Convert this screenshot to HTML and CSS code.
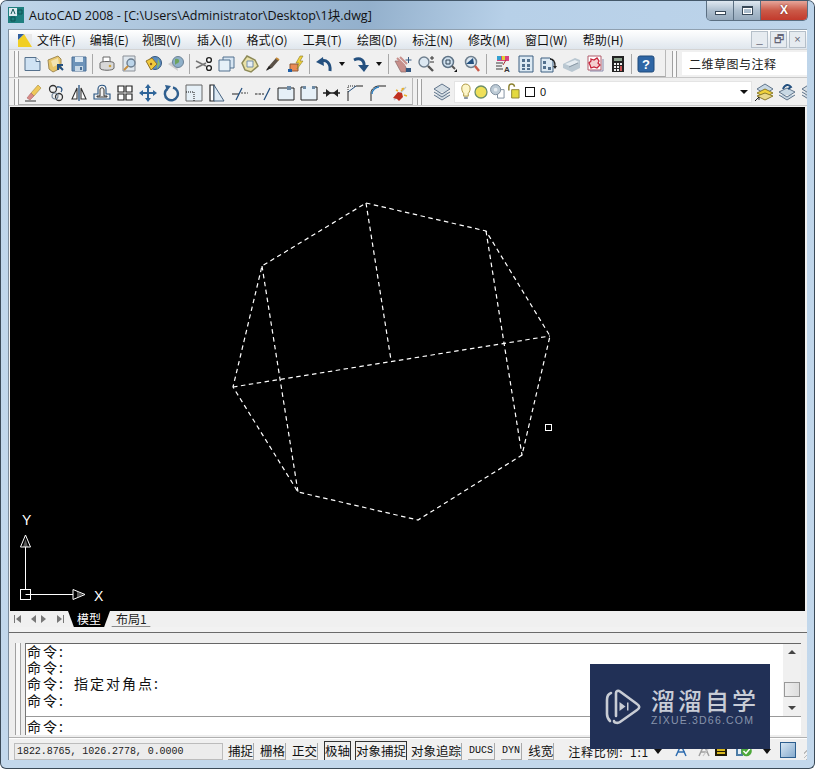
FILE: index.html
```html
<!DOCTYPE html>
<html lang="zh">
<head>
<meta charset="utf-8">
<title>AutoCAD 2008</title>
<link rel="stylesheet" href="styles.css">
</head>
<body>
<svg class="defs" width="0" height="0">
<defs>
<symbol id="new" viewBox="0 0 18 18"><path d="M1 2.500h11l4 4v9H1z" fill="#cfe2f3" stroke="#55708c"/><path d="M12 2.500v4h4" fill="#fff" stroke="#55708c"/></symbol>
<symbol id="open" viewBox="0 0 18 18"><path d="M1 5l10-4 3 3v9l-8 4-4-3z" fill="#e8c66b" stroke="#a08a55"/><path d="M4 6l7-3 1 6-6 3z" fill="#f3e3b0"/><path d="M11 10l5 5M11 15v-5h5" stroke="#24507f" stroke-width="2" fill="none"/></symbol>
<symbol id="save" viewBox="0 0 18 18"><path d="M2 2h14v14H2z" fill="#6d93b9" stroke="#4a6f96"/><path d="M5 2h8v5H5z" fill="#dbe8f3"/><path d="M5 11h8v5H5z" fill="#c8d8e6"/><path d="M10 12h2v3h-2z" fill="#4a6f96"/></symbol>
<symbol id="print" viewBox="0 0 18 18"><path d="M5 2h7v5H5z" fill="#fff" stroke="#666"/><path d="M2 8c0-2 14-2 14 0v5c0 3-14 3-14 0z" fill="#d8d8d8" stroke="#666"/><circle cx="12" cy="11" r="1.300" fill="#c9a13f"/></symbol>
<symbol id="prev" viewBox="0 0 18 18"><path d="M2 1h12v15H2z" fill="#dfe7ee" stroke="#8a8f96"/><circle cx="10" cy="8" r="4" fill="#bcd5ea" stroke="#6c7d8f" stroke-width="1.400"/><path d="M7 11l-4 4" stroke="#c78f3f" stroke-width="2"/></symbol>
<symbol id="pub" viewBox="0 0 18 18"><circle cx="11" cy="8" r="6.500" fill="#5d8dc0" stroke="#36587d"/><path d="M2 6l6-3 5 6-6 6z" fill="#f1c93c" stroke="#94752a"/><circle cx="7" cy="9" r="1.200" fill="#8a5a20"/><path d="M14 3l2 6-3 5" fill="#8bbb6a"/></symbol>
<symbol id="globe" viewBox="0 0 18 18"><path d="M1 9l8-5 2 12z" fill="#ccc"/><circle cx="11" cy="7" r="5.500" fill="#8fb0c9" stroke="#6c8296"/><path d="M8 4c3-1 5 1 4 3s-3 1-4 3z" fill="#6ea35f"/></symbol>
<symbol id="cut" viewBox="0 0 18 18"><path d="M1 6l10 5M1 13l10-5" stroke="#777" stroke-width="1.500"/><circle cx="14" cy="5" r="2.400" fill="#fff" stroke="#222" stroke-width="1.400"/><circle cx="14" cy="13" r="2.400" fill="#fff" stroke="#222" stroke-width="1.400"/></symbol>
<symbol id="copy" viewBox="0 0 18 18"><path d="M5 2h11v11H5z" fill="#d6e5f2" stroke="#52708e"/><path d="M1 5h11v11H1z" fill="#e6f0f8" stroke="#52708e"/></symbol>
<symbol id="paste" viewBox="0 0 18 18"><path d="M6 1l8 4 3 6-7 6-6-2-3-7z" fill="#e9e1a7" stroke="#8d8a58" stroke-width="1.500"/><path d="M6 6h6v6H6z" fill="#e5eef5" stroke="#758fa8"/></symbol>
<symbol id="match" viewBox="0 0 18 18"><path d="M2 15l3-4 7-8 3 2-7 8z" fill="#5a5148"/><path d="M2 16l3-5 2 2z" fill="#222"/><path d="M12 3l3 2" stroke="#c58a38" stroke-width="2"/></symbol>
<symbol id="block" viewBox="0 0 18 18"><path d="M3 9h8v7H3z" fill="#e98a55" stroke="#8a5a3b"/><path d="M1 14h4v3H1z" fill="#1e5fa8"/><path d="M13 1l-4 7h3l-2 6 6-8h-3l3-5z" fill="#f0d23a" stroke="#8a7a2a" stroke-width=".6"/></symbol>
<symbol id="undo" viewBox="0 0 18 18"><path d="M15 16C16 8 11 4 6 6" fill="none" stroke="#24507f" stroke-width="3"/><path d="M1 7l7-5 1 9z" fill="#24507f"/></symbol>
<symbol id="redo" viewBox="0 0 18 18"><path d="M2 5c6-3 11 0 10 7" fill="none" stroke="#24507f" stroke-width="3"/><path d="M6 10l11 0-5 7z" fill="#24507f"/></symbol>
<symbol id="pan" viewBox="0 0 18 18"><path d="M1 6l4 0 7 6 0 5-5 0z" fill="#c88f8b" stroke="#8a6a6a" stroke-width=".7"/><path d="M3 3l8 8M6 2l7 7" stroke="#c88f8b" stroke-width="2"/><path d="M12 13h5v4h-5z" fill="#33567f"/><path d="M14 2h1v6h-1zM11.500 4.500h6v1h-6z" fill="#33567f"/></symbol>
<symbol id="zoomr" viewBox="0 0 18 18"><circle cx="7" cy="7" r="5" fill="#dce8f2" stroke="#6f7f8e" stroke-width="1.400"/><path d="M11 11l5 5" stroke="#555" stroke-width="2.400"/><path d="M13 3h4M15 1v4M13 7h4" stroke="#333"/></symbol>
<symbol id="zoomw" viewBox="0 0 18 18"><circle cx="8" cy="7" r="5.500" fill="#cfe0ee" stroke="#5f7386" stroke-width="1.500"/><path d="M6 5h4v4H6z" fill="none" stroke="#345"/><path d="M12 11l3 3" stroke="#555" stroke-width="2"/><path d="M14 17h3v-3z" fill="#111"/></symbol>
<symbol id="zoomp" viewBox="0 0 18 18"><circle cx="8" cy="7" r="5.500" fill="#dce8f2" stroke="#6f7f8e" stroke-width="1.500"/><path d="M3 9L10 3l1 6z" fill="#24507f"/><path d="M12 11l4 5" stroke="#c85a4a" stroke-width="2.400"/></symbol>
<symbol id="prop" viewBox="0 0 18 18"><path d="M3 1h12v5H3z" fill="#d6427f"/><path d="M3 1h4v4H3z" fill="#35a0d0"/><path d="M8 1h3v4H8z" fill="#e2cf32"/><path d="M2 8h7M2 11h6M2 14h7" stroke="#777" stroke-width="1.300"/><path d="M12 5l-3 5" stroke="#a33"/><text x="10" y="17" class="ttiny">A</text></symbol>
<symbol id="dc" viewBox="0 0 18 18"><path d="M2 1h14v16H2z" fill="#dce9f3" stroke="#3d5f80"/><path d="M5 4h3v3H5zM10 4h3v3h-3zM5 9h3v3H5zM10 9h3v3h-3zM5 13h3v2H5zM10 13h3v2h-3z" fill="#52708e"/></symbol>
<symbol id="tool" viewBox="0 0 18 18"><path d="M1 3h9l3 3v11H1z" fill="#dce9f3" stroke="#3d5f80"/><path d="M3 6h3v3H3zM3 11h3v3H3z" fill="#52708e"/><path d="M10 4c4 0 5 3 5 7" fill="none" stroke="#222" stroke-width="1.300"/><path d="M13 11h4l-2 3z" fill="#222"/><path d="M8 12h3v3H8z" fill="#52708e"/></symbol>
<symbol id="sheet" viewBox="0 0 18 18"><path d="M0 9l12-6 5 2v8l-8 4-9-4z" fill="#b9c7d1"/><path d="M2 9l10-4 4 2-9 4z" fill="#e6edf2"/><path d="M6 12l9-4" stroke="#8a99a6"/></symbol>
<symbol id="markup" viewBox="0 0 18 18"><path d="M2 1h13v14H2z" fill="#fff" stroke="#b05a6a"/><path d="M4 16h13V4" fill="none" stroke="#88a"/><path d="M5 4l3 1 3-2 2 3-1 2 2 2-3 3-3-1-3 1-1-3-1-2 2-2z" fill="#f4cfd0" stroke="#c8243a" stroke-width="1.300"/></symbol>
<symbol id="calc" viewBox="0 0 18 18"><path d="M3 1h12v16H3z" fill="#222"/><path d="M5 3h8v3H5z" fill="#8da38f"/><path d="M5 8h2v2H5zM8 8h2v2H8zM11 8h2v2h-2zM5 11h2v2H5zM8 11h2v2H8zM5 14h2v2H5zM8 14h2v2H8z" fill="#eee"/><path d="M11 11h2v5h-2z" fill="#c55"/></symbol>
<symbol id="help" viewBox="0 0 18 18"><rect x="1" y="1" width="16" height="16" rx="2" fill="#2f66a5" stroke="#204a7b"/><text x="9" y="14" class="tq">?</text></symbol>
<symbol id="erase" viewBox="0 0 18 18"><path d="M1 17h11" stroke="#333"/><path d="M7 9L14 1l3 3-7 8z" fill="#efc85a" stroke="#a58a3c" stroke-width=".6"/><path d="M3 14l4-5 3 3-4 4z" fill="#d88a86" stroke="#a66" stroke-width=".6"/></symbol>
<symbol id="ccopy" viewBox="0 0 18 18"><circle cx="6" cy="5" r="3.500" fill="none" stroke="#333" stroke-width="1.300"/><circle cx="12" cy="13" r="3.500" fill="none" stroke="#333" stroke-width="1.300"/><circle cx="8" cy="12" r="3" fill="none" stroke="#789" stroke-width="1.200"/><path d="M10 3c5-1 6 3 4 5" fill="none" stroke="#24507f" stroke-width="1.300"/></symbol>
<symbol id="mirror" viewBox="0 0 18 18"><path d="M9 1v16" stroke="#24507f" stroke-width="1.300"/><path d="M7 4v11H2zM11 4v11h5z" fill="#fff" stroke="#333" stroke-width="1.100"/></symbol>
<symbol id="offset" viewBox="0 0 18 18"><path d="M1 15v-5h4V5c0-5 8-5 8 0v5h4v5z" fill="none" stroke="#24507f" stroke-width="1.100"/><path d="M4 13v-1h3V6c0-3 4-3 4 0v6h3v1z" fill="none" stroke="#333"/></symbol>
<symbol id="array" viewBox="0 0 18 18"><path d="M2 2h6v6H2zM10 2h6v6h-6zM2 10h6v6H2zM10 10h6v6h-6z" fill="#fff" stroke="#222" stroke-width="1.200"/></symbol>
<symbol id="move" viewBox="0 0 18 18"><path d="M9 0l3 4h-2v4h4V6l4 3-4 3v-2h-4v4h2l-3 4-3-4h2v-4H4v2L0 9l4-3v2h4V4H6z" fill="#2f6599"/></symbol>
<symbol id="rot" viewBox="0 0 18 18"><path d="M5 5a6.500 6.500 0 1 0 6-1.500" fill="none" stroke="#2f5f8f" stroke-width="2.400"/><path d="M3 1l6 1-4 5z" fill="#2f5f8f"/></symbol>
<symbol id="scale" viewBox="0 0 18 18"><path d="M1 1h16v16H1z" fill="#e6f0f7" stroke="#666"/><path d="M1 8h8v9" fill="none" stroke="#111" stroke-dasharray="1 1"/></symbol>
<symbol id="stretch" viewBox="0 0 18 18"><path d="M2 1h4v16H2z" fill="#fff" stroke="#222" stroke-width="1.200"/><path d="M6 1l10 16H6z" fill="#dde9f3" stroke="#46627f"/></symbol>
<symbol id="trim" viewBox="0 0 18 18"><path d="M1 10h7" stroke="#222"/><path d="M10 9h7" stroke="#444" stroke-dasharray="2 1"/><path d="M5 16l6-12" stroke="#24507f" stroke-width="1.200"/></symbol>
<symbol id="extend" viewBox="0 0 18 18"><path d="M1 10h9" stroke="#222" stroke-dasharray="2.500 1"/><path d="M10 16l6-12" stroke="#24507f" stroke-width="1.200"/></symbol>
<symbol id="brkp" viewBox="0 0 18 18"><path d="M1 4h16v12H1z" fill="#e6f0f7" stroke="#222"/><path d="M10 2h4v4h-4z" fill="#6d8aa5"/></symbol>
<symbol id="brk" viewBox="0 0 18 18"><path d="M5 3H1v13h16V3h-4" fill="#e6f0f7" stroke="#222"/><path d="M3 2h3v3H3zM12 2h3v3h-3z" fill="#6d8aa5"/></symbol>
<symbol id="join" viewBox="0 0 18 18"><path d="M0 9h17" stroke="#222" stroke-width="1.400"/><path d="M3 5l5 4-5 4zM15 5l-5 4 5 4z" fill="#222"/></symbol>
<symbol id="cham" viewBox="0 0 18 18"><path d="M2 17V8" stroke="#222"/><path d="M10 2h7" stroke="#222"/><path d="M2 8l8-6" stroke="#24507f"/><path d="M2 8V2h8" stroke="#222" stroke-dasharray="1 1" fill="none"/></symbol>
<symbol id="fil" viewBox="0 0 18 18"><path d="M2 17V9C2 5 6 2 10 2h7" fill="none" stroke="#222"/><path d="M3 10c0-4 4-7 7-7" fill="none" stroke="#2f7fc0" stroke-width="1.500"/></symbol>
<symbol id="expl" viewBox="0 0 18 18"><path d="M2 16L14 3" stroke="#b9c7d1" stroke-width="1.300"/><path d="M6 8l4 1 1 4-4 4-2-2-4-1z" fill="#c03020"/><path d="M4 6l2 1M10 4l1 2M12 11l3 1M9 7l3-3" stroke="#e8b030" stroke-width="1.400"/></symbol>
<symbol id="layer" viewBox="0 0 18 18"><path d="M1 6l8-5 8 5-8 5zM1 9l8 5 8-5M1 12l8 5 8-5" fill="#d4dde4" stroke="#60748a"/></symbol>
<symbol id="layer2" viewBox="0 0 18 18"><path d="M2 6l8-5 8 5-8 5z" fill="#c8d8e4" stroke="#60748a"/><path d="M2 10l8-4 8 4-8 4z" fill="#f0d23a" stroke="#8a7a2a"/><path d="M2 13l8-3 8 3-8 4z" fill="#e9d98a" stroke="#8a7a2a"/><path d="M0 18l4-4v3" stroke="#222" fill="none"/></symbol>
<symbol id="layer3" viewBox="0 0 18 18"><path d="M1 9l8-4 8 4-8 5zM1 12l8 5 8-5" fill="#c8d8e4" stroke="#60748a"/><path d="M5 6c2-5 6-5 8-2l-3 2" fill="none" stroke="#24507f" stroke-width="2"/></symbol>
<symbol id="bulb" viewBox="0 0 14 18"><path d="M7 1c6 0 6 7 3 10v3H5v-3C2 8 2 1 7 1z" fill="#fdf6c8" stroke="#a8913a"/><path d="M5.500 15h4v2h-4z" fill="#8a96a0"/></symbol>
<symbol id="sun" viewBox="0 0 14 14"><circle cx="7" cy="7" r="6" fill="#efe05a" stroke="#6d8f6a" stroke-width="1.300"/></symbol>
<symbol id="frz" viewBox="0 0 16 16"><path d="M8 6h7v9H8z" fill="#fff" stroke="#7d8d9d"/><circle cx="6" cy="6" r="5.400" fill="#bccad5" stroke="#7d8d9d"/><circle cx="6" cy="6" r="2" fill="#e7edf2"/></symbol>
<symbol id="lock" viewBox="0 0 14 18"><path d="M2 8V4c0-4 6-4 6 0" fill="none" stroke="#8d8232" stroke-width="1.600"/><path d="M5 7h8v9H5z" fill="#e4d93f" stroke="#8d8232"/></symbol>
<symbol id="anno" viewBox="0 0 14 14"><path d="M1 13L6 2l5 11M3 9h7" fill="none" stroke="#2f6db0" stroke-width="1.500"/><path d="M9 1h4v4H9z" fill="#efe05a"/></symbol>
<symbol id="anno2" viewBox="0 0 14 14"><path d="M1 13L6 2l5 11M3 9h7" fill="none" stroke="#a0a0a0" stroke-width="1.500"/><path d="M5 13L13 2" stroke="#c8c8c8" stroke-width="1.200"/></symbol>
<symbol id="stack" viewBox="0 0 12 14"><path d="M0 1h12v12H0z" fill="#1e1a08"/><path d="M2 3h8v2H2zM2 6h8v2H2zM2 9h8v2H2z" fill="#d8b81e"/></symbol>
<symbol id="tick" viewBox="0 0 16 14"><path d="M0 1h7v12H0z" fill="#4c7ca6"/><path d="M2 3h3v8H2z" fill="#e6eef5"/><circle cx="10.500" cy="8" r="5.300" fill="#4da83a"/><path d="M7.500 8l2.500 2.500 4-5" fill="none" stroke="#fff" stroke-width="1.500"/></symbol>
<symbol id="logo" viewBox="0 0 36 36"><path d="M11 27V4c0-2 2-3 4-1.500L32 15c3 2 3 4 0 6L15 33c-2 1.500-6 1-6-1" fill="none" stroke="#c8ccd4" stroke-width="2.600" stroke-linecap="round"/><path d="M6 4C3 5 2 8 2 11V25c0 3 1 5 3 7" fill="none" stroke="#c8ccd4" stroke-width="2.600" stroke-linecap="round"/><path d="M14.500 13v9l6-4.500z" fill="#c8ccd4"/><path d="M22 13.500h1.500v8H22z" fill="#c8ccd4"/></symbol>
</defs>
</svg>
<div class="window">
  <header class="titlebar">
    <svg class="appicon" viewBox="0 0 16 16"><rect width="16" height="16" fill="#1f7f7f"/><path d="M1 1h8v8H1z" fill="#dfeaf0"/><path d="M3 7l2-5 2 5M10 3h4v4h-4zM3 10h4v4H3z" fill="none" stroke="#155"/></svg>
    <span class="wintitle">AutoCAD 2008 - [C:\Users\Administrator\Desktop\1块.dwg]</span>
    <div class="winctl">
      <span class="wc wc-min"><i class="g-min"></i></span>
      <span class="wc wc-max"><i class="g-max"></i></span>
      <span class="wc wc-close">X</span>
    </div>
  </header>
  <div class="inner">
    <nav class="menubar">
      <svg class="menuicon" viewBox="0 0 16 16"><path d="M1 2h14v13H1z" fill="#e9e9e9"/><path d="M1 15V8l6-6 8 13z" fill="#f1cf24"/><path d="M1 8l6-6H1z" fill="#2f5f9f"/></svg>
      <span class="mi mi-first">文件(F)</span><span class="mi mi-tight">编辑(E)</span><span class="mi mi-tighter">视图(V)</span><span class="mi mi-wide">插入(I)</span><span class="mi mi-tight">格式(O)</span><span class="mi">工具(T)</span><span class="mi">绘图(D)</span><span class="mi">标注(N)</span><span class="mi">修改(M)</span><span class="mi">窗口(W)</span><span class="mi">帮助(H)</span>
      <div class="mdictl"><span class="md">_</span><span class="md">&#x1F5D7;&#xFE0E;</span><span class="md">×</span></div>
    </nav>
    <div class="tbrow">
      <span class="grip"></span>
      <div class="tb">
        <span class="b"><svg class="i"><use href="#new"/></svg></span><span class="b"><svg class="i"><use href="#open"/></svg></span><span class="b"><svg class="i"><use href="#save"/></svg></span><span class="sep"></span>
        <span class="b"><svg class="i"><use href="#print"/></svg></span><span class="b"><svg class="i"><use href="#prev"/></svg></span><span class="b"><svg class="i"><use href="#pub"/></svg></span><span class="b"><svg class="i"><use href="#globe"/></svg></span><span class="sep"></span>
        <span class="b"><svg class="i"><use href="#cut"/></svg></span><span class="b"><svg class="i"><use href="#copy"/></svg></span><span class="b"><svg class="i"><use href="#paste"/></svg></span><span class="b"><svg class="i"><use href="#match"/></svg></span><span class="b"><svg class="i"><use href="#block"/></svg></span><span class="sep"></span>
        <span class="b"><svg class="i"><use href="#undo"/></svg></span><span class="dd"></span><span class="b"><svg class="i"><use href="#redo"/></svg></span><span class="dd"></span><span class="sep"></span>
        <span class="b"><svg class="i"><use href="#pan"/></svg></span><span class="b"><svg class="i"><use href="#zoomr"/></svg></span><span class="b"><svg class="i"><use href="#zoomw"/></svg></span><span class="b"><svg class="i"><use href="#zoomp"/></svg></span><span class="sep sep-wide"></span>
        <span class="b"><svg class="i"><use href="#prop"/></svg></span><span class="b"><svg class="i"><use href="#dc"/></svg></span><span class="b"><svg class="i"><use href="#tool"/></svg></span><span class="b"><svg class="i"><use href="#sheet"/></svg></span><span class="b"><svg class="i"><use href="#markup"/></svg></span><span class="b"><svg class="i"><use href="#calc"/></svg></span><span class="sep"></span>
        <span class="b"><svg class="i"><use href="#help"/></svg></span>
      </div>
      <span class="grip grip-2"></span>
      <div class="wscombo">二维草图与注释</div>
    </div>
    <div class="tbrow tbrow-2">
      <span class="grip"></span>
      <div class="tb tb-2">
        <span class="b"><svg class="i"><use href="#erase"/></svg></span><span class="b"><svg class="i"><use href="#ccopy"/></svg></span><span class="b"><svg class="i"><use href="#mirror"/></svg></span><span class="b"><svg class="i"><use href="#offset"/></svg></span><span class="b"><svg class="i"><use href="#array"/></svg></span><span class="b"><svg class="i"><use href="#move"/></svg></span><span class="b"><svg class="i"><use href="#rot"/></svg></span><span class="b"><svg class="i"><use href="#scale"/></svg></span><span class="b"><svg class="i"><use href="#stretch"/></svg></span><span class="b"><svg class="i"><use href="#trim"/></svg></span><span class="b"><svg class="i"><use href="#extend"/></svg></span><span class="b"><svg class="i"><use href="#brkp"/></svg></span><span class="b"><svg class="i"><use href="#brk"/></svg></span><span class="b"><svg class="i"><use href="#join"/></svg></span><span class="b"><svg class="i"><use href="#cham"/></svg></span><span class="b"><svg class="i"><use href="#fil"/></svg></span><span class="b"><svg class="i"><use href="#expl"/></svg></span>
      </div>
      <span class="grip grip-3"></span>
      <span class="b"><svg class="i"><use href="#layer"/></svg></span>
      <div class="laycombo">
        <svg class="li li-bulb"><use href="#bulb"/></svg><svg class="li li-sun"><use href="#sun"/></svg><svg class="li li-frz"><use href="#frz"/></svg><svg class="li li-lock"><use href="#lock"/></svg><span class="swatch"></span><span class="layname">0</span>
        <span class="comboarrow"></span>
      </div>
      <span class="b"><svg class="i"><use href="#layer2"/></svg></span><span class="b"><svg class="i"><use href="#layer3"/></svg></span><span class="b"><svg class="i"><use href="#layer"/></svg></span>
    </div>
    <main class="canvas">
      <svg class="drawing" viewBox="0 0 795 504" width="795" height="504">
        <g class="dash">
          <path d="M356 96L476 124L540 229L512 348L408 413L288 385L223 280L252 159Z"/>
          <path d="M356 96L381 253"/>
          <path d="M476 124L512 348"/>
          <path d="M252 159L288 385"/>
          <path d="M223 280L540 229"/>
        </g>
        <rect class="pick" x="535.500" y="317.500" width="6" height="6"/>
        <g class="ucs">
          <path d="M15.500 482V440M15.500 487.500H63"/>
          <path d="M15.500 428L10.500 440H20.500Z"/>
          <path d="M63 482.500L75 487.500L63 492.500Z"/>
          <path class="ucsfill" d="M15.500 432L13 440H18Z"/>
          <path class="ucsfill" d="M67 484.500L73 487.500L67 490.500Z"/>
          <rect x="10.500" y="482.500" width="10" height="10"/>
        </g>
        <text class="ucstext" x="12" y="418">Y</text>
        <text class="ucstext" x="84" y="494">X</text>
      </svg>
    </main>
    <div class="tabs">
      <div class="tabnav"><span class="tn tn-first"></span><span class="tn tn-prev"></span><span class="tn tn-next"></span><span class="tn tn-last"></span></div>
      <span class="tab tab-on">模型</span><span class="tab tab-off">布局1</span>
    </div>
    <div class="band"></div>
    <section class="cmdwrap">
      <span class="grip grip-v"></span>
      <div class="cmd">
        <div class="cmdhist">
          <div class="log">
            <div class="cl">命令:</div>
            <div class="cl">命令:</div>
            <div class="cl">命令: 指定对角点:</div>
            <div class="cl">命令:</div>
          </div>
          <div class="sb">
            <span class="sb-up"></span>
            <span class="sb-track"><span class="sb-thumb"></span></span>
            <span class="sb-dn"></span>
          </div>
        </div>
        <div class="cmdinput"><span class="cl">命令:</span></div>
      </div>
    </section>
    <footer class="status">
      <span class="coords">1822.8765, 1026.2778, 0.0000</span>
      <div class="sbtns">
        <span class="sbtn">捕捉</span><span class="sbtn">栅格</span><span class="sbtn">正交</span><span class="sbtn on">极轴</span><span class="sbtn on">对象捕捉</span><span class="sbtn">对象追踪</span><span class="sbtn mono">DUCS</span><span class="sbtn mono">DYN</span><span class="sbtn">线宽</span>
      </div>
      <span class="scale">注释比例: 1:1</span><span class="sarrow"></span>
      <span class="tray">
        <svg class="ti ti-a"><use href="#anno"/></svg><svg class="ti ti-b"><use href="#anno2"/></svg><svg class="ti ti-c"><use href="#stack"/></svg><svg class="ti ti-d"><use href="#tick"/></svg>
      </span>
      <span class="sarrow sarrow-2"></span>
      <span class="clean"></span>
      <span class="sizegrip"></span>
    </footer>
  </div>
  <aside class="watermark">
    <svg class="wm-logo"><use href="#logo"/></svg>
    <div class="wm-text">
      <div class="wm-cn">溜溜自学</div>
      <div class="wm-en">ZIXUE.3D66.COM</div>
    </div>
  </aside>
</div>
</body>
</html>
```
FILE: styles.css
```css
* { box-sizing: border-box; }
html, body { margin: 0; padding: 0; }
body { width: 815px; height: 769px; overflow: hidden; background: #fff; font-family: "Liberation Sans", "Noto Sans CJK SC", sans-serif; }
.defs { position: absolute; }
.ttiny { font: 700 8px "Liberation Sans", sans-serif; fill: #333; }
.tq { font: 700 13px "Liberation Sans", sans-serif; fill: #fff; text-anchor: middle; }

.window { position: relative; width: 815px; height: 769px; display: flex; flex-direction: column; overflow: hidden; padding-bottom: 8px;
  border-radius: 7px 7px 6px 6px; border: 1px solid #3b4a58; border-top-color: #44586a;
  background: linear-gradient(#a3c0dc 0, #bed5ea 28px, #c3d8ec 100%); }

.titlebar { height: 28px; flex: none; display: flex; align-items: center; padding-left: 7px;
  background: linear-gradient(100deg, #c0d6ea 0, #93b0cc 45%, #b7d0e8 62%, #bdd4ea 100%); }
.appicon { width: 16px; height: 16px; margin-top: -1px; }
.wintitle { margin-left: 5px; margin-top: -1px; font: 12.550px "Open Sans", "Noto Sans CJK SC", sans-serif; color: #111; white-space: nowrap; }
.winctl { margin-left: auto; margin-right: 6px; margin-top: -9px; height: 20px; display: flex; border: 1px solid #5b6f82; border-top: 0; border-radius: 0 0 5px 5px; overflow: hidden; }
.wc { display: flex; align-items: center; justify-content: center; height: 19px; background: linear-gradient(#dfe8f1, #aebfcf 50%, #95a9bc); border-right: 1px solid #5b6f82; }
.wc-min, .wc-max { width: 27px; }
.wc-close { width: 46px; border-right: 0; background: linear-gradient(#e6a69a, #cb5a48 50%, #c23a2c); color: #fff; font: 700 12px "Liberation Sans", sans-serif; text-shadow: 0 0 2px #622; }
.g-min { display: block; width: 11px; height: 4px; margin-top: 5px; border: 1px solid #384858; background: #fff; }
.g-max { display: block; width: 11px; height: 9px; border: 1px solid #384858; border-top-width: 2px; box-shadow: inset 0 0 0 1px #fff; }

.inner { flex: 1; min-height: 0; margin: 0 7px; display: flex; flex-direction: column; background: #f0f0f0; border-top: 1px solid #8fa0b0; border-left: 1px solid #7d8d9d; }

.menubar { height: 20px; flex: none; display: flex; align-items: center; font: 12px "Noto Sans CJK SC", sans-serif; color: #111; padding-left: 8px; background: linear-gradient(#fff, #dfe6ed); border-bottom: 1px solid #d4d4d4; }
.menuicon { width: 16px; height: 16px; }
.mi { margin-left: 15px; white-space: nowrap; }
.mi-first { margin-left: 4px; }
.mi-tight { margin-left: 14px; }
.mi-tighter { margin-left: 13px; }
.mi-wide { margin-left: 16px; }
.mdictl { margin-left: auto; display: flex; gap: 2px; margin-right: 1px; }
.md { width: 17px; height: 17px; border: 1px solid #b5bfc9; background: #e6ebf0; font: 11px/15px "Liberation Sans", "DejaVu Sans", sans-serif; color: #667; text-align: center; }

.tbrow { height: 28px; flex: none; display: flex; align-items: center; padding-left: 5px; border-bottom: 1px solid #c8c8c8; background: #f0f0f0; }
.grip { width: 5px; height: 26px; flex: none; border-left: 1px solid #a0a0a0; border-right: 1px solid #a0a0a0; background: #f8f8f8; }
.tb { display: flex; align-items: center; width: 647px; padding: 2px 0 0 2px; height: 27px; border-right: 1px solid #b8b8b8; border-bottom: 1px solid #a8a8a8; }
.tb-2 { width: 398px; }
.b { width: 23px; height: 22px; flex: none; display: flex; align-items: center; justify-content: center; }
.tbrow-2 .b { margin-top: 1px; }
.i { width: 18px; height: 18px; display: block; }
.sep { width: 1px; height: 20px; margin: 0 2px; flex: none; background: #a8a8a8; }
.sep-wide { margin: 0 4px 0 3px; }
.dd { flex: none; width: 0; height: 0; margin: 0 4px; border: 3px solid transparent; border-top: 4px solid #111; border-bottom: 0; }
.grip-2 { margin-left: 6px; }
.wscombo { flex: 1; margin-left: 5px; height: 23px; padding-left: 7px; background: #fff; font: 12px/23px "Noto Sans CJK SC", sans-serif; color: #222; letter-spacing: .5px; white-space: nowrap; }
.tbrow-2 { overflow: hidden; }
.grip-3 { margin: 0 8px 0 4px; }
.laycombo { width: 298px; flex: none; height: 22px; margin-left: 1px; padding-left: 4px; display: flex; align-items: center; background: #fff; border: 1px solid #e4e4e4; font: 11px "Liberation Sans", sans-serif; color: #111; }
.li { display: block; flex: none; }
.li-bulb { width: 13px; height: 17px; }
.li-sun { width: 14px; height: 14px; margin-left: 2px; }
.li-frz { width: 15px; height: 15px; margin-left: 2px; }
.li-lock { width: 13px; height: 17px; margin-left: 2px; }
.swatch { width: 10px; height: 10px; margin-left: 5px; border: 1px solid #111; background: #fff; }
.layname { margin-left: 5px; }
.comboarrow { margin-left: auto; margin-right: 3px; width: 0; height: 0; border: 4px solid transparent; border-top: 4px solid #111; border-bottom: 0; }

.canvas { height: 505px; flex: none; margin: 1px 2px 0 1px; background: #000; display: block; }
.drawing { display: block; margin: 0; }
.dash { fill: none; stroke: #fff; stroke-width: 1.200; stroke-dasharray: 4.500 3.500; }
.pick { fill: none; stroke: #fff; }
.ucs { fill: none; stroke: #fff; }
.ucsfill { fill: #fff; stroke: none; opacity: .35; }
.ucstext { font: 14px "Liberation Sans", sans-serif; fill: #fff; }

.tabs { height: 16px; flex: none; display: flex; align-items: center; padding-left: 2px; margin-top: -1px; background: #f0f0f0; font: 12px "Noto Sans CJK SC", sans-serif; }
.tabnav { display: flex; align-items: center; height: 14px; width: 57px; flex: none; }
.tn { display: block; flex: none; width: 15px; height: 14px; position: relative; }
.tn::after { content: ""; position: absolute; top: 3px; width: 0; height: 0; border: 4px solid transparent; }
.tn-first::after, .tn-prev::after { border-right: 5px solid #777; border-left: 0; }
.tn-next::after, .tn-last::after { border-left: 5px solid #777; border-right: 0; }
.tn-first::after { left: 5px; }
.tn-prev::after { left: 5px; }
.tn-next::after { left: 0; }
.tn-last { width: 12px; }
.tn-last::after { left: 1px; }
.tn-first::before, .tn-last::before { content: ""; position: absolute; top: 3px; width: 1px; height: 8px; background: #777; }
.tn-first::before { left: 3px; }
.tn-last::before { left: 7px; }
.tab { display: block; height: 16px; line-height: 15px; white-space: nowrap; }
.tab-on { background: #000; color: #fff; width: 42px; padding-left: 9px; clip-path: polygon(0 0, 100% 0, 86% 100%, 14% 100%); }
.tab-off { width: 48px; padding-left: 9px; margin-left: -3px; border-bottom: 1px solid #888; color: #222; clip-path: polygon(0 0, 100% 0, 90% 100%, 10% 100%); }

.band { height: 6px; flex: none; background: #f2f2f2; border-bottom: 1px solid #6a6a6a; }

.cmdwrap { height: 105px; flex: none; display: flex; padding: 10px 6px 0 6px; background: #eee; border-bottom: 1px solid #b0b0b0; }
.grip-v { height: 92px; width: 6px; }
.cmd { flex: 1; margin-left: 4px; height: 92px; display: flex; flex-direction: column; background: #fff; border-top: 1px solid #666; border-left: 1px solid #777; }
.cmdhist { height: 73px; flex: none; display: flex; border-bottom: 1px solid #999; }
.log { flex: 1; padding: 0 0 0 1px; margin-top: -1px; }
.cl { display: block; height: 16.200px; font: 14px/16px "Noto Sans CJK SC", sans-serif; letter-spacing: 2px; word-spacing: 4px; color: #111; white-space: nowrap; }
.sb { width: 18px; flex: none; display: flex; flex-direction: column; align-items: center; background: #f0f0f0; }
.sb-up, .sb-dn { flex: none; width: 0; height: 0; margin: 6px 0; border: 4px solid transparent; }
.sb-up { border-bottom: 4px solid #444; border-top: 0; }
.sb-dn { border-top: 4px solid #444; border-bottom: 0; }
.sb-track { flex: 1; width: 100%; display: flex; align-items: flex-end; justify-content: center; }
.sb-thumb { width: 16px; height: 15px; margin-bottom: 3px; background: linear-gradient(90deg, #eee, #ddd); border: 1px solid #999; }
.cmdinput { flex: 1; padding: 1px 0 0 1px; }

.status { flex: 1; min-height: 0; display: flex; align-items: flex-start; padding: 4px 0 0 5px; background: #f0f0f0; border-top: 1px solid #fff; overflow: hidden; font: 12px "Noto Sans CJK SC", sans-serif; color: #111; }
.coords { flex: none; width: 209px; height: 17px; padding-left: 2px; border: 1px solid #bcbcbc; background: #ececec; font: 10px/16px "Liberation Mono", monospace; letter-spacing: -.06px; color: #222; }
.sbtns { display: flex; gap: 6px; margin-left: 5px; flex: none; }
.sbtn { flex: none; height: 17px; padding: 0; line-height: 15px; font-size: 12.500px; white-space: nowrap; border-right: 1px solid #aaa; border-bottom: 1px solid #aaa; }
.sbtn.on { border: 1px solid #333; border-bottom: 0; height: 20px; margin: -2px -2px 0 0; line-height: 18px; }
.sbtn.mono { font: 10px/15px "Liberation Mono", monospace; padding: 0 1px; }
.scale { flex: none; margin-left: 14px; white-space: nowrap; line-height: 17px; letter-spacing: .8px; word-spacing: 3px; }
.sarrow { flex: none; width: 0; height: 0; margin: 6px 0 0 5px; border: 4px solid transparent; border-top: 5px solid #111; border-bottom: 0; }
.tray { display: flex; margin-left: 13px; flex: none; }
.ti { height: 14px; display: block; }
.ti-a { width: 14px; }
.ti-b { width: 14px; margin-left: 9px; }
.ti-c { width: 12px; margin-left: 3px; }
.ti-d { width: 16px; margin-left: 9px; }
.sarrow-2 { margin-left: 11px; }
.clean { flex: none; width: 16px; height: 16px; margin: -1px 0 0 9px; background: linear-gradient(135deg, #d7e6f3, #85aacd); border: 1px solid #2d5e8e; }
.sizegrip { flex: none; width: 10px; height: 10px; margin: 7px 0 0 8px; background: repeating-linear-gradient(135deg, transparent 0 2px, #bbb 2px 3px); }

.watermark { position: absolute; left: 589px; top: 663px; width: 180px; height: 85px; display: flex; align-items: center; padding: 0 0 0 15px; background: #213056; }
.wm-logo { width: 36px; height: 36px; display: block; flex: none; }
.wm-text { margin-left: 10px; display: flex; flex-direction: column; }
.wm-cn { font: 500 24px/28px "Noto Sans CJK SC", sans-serif; letter-spacing: 3px; color: #c8ccd6; white-space: nowrap; }
.wm-en { font: 10.500px/13px "Liberation Sans", sans-serif; letter-spacing: 1.200px; color: #8793ab; white-space: nowrap; }
```
